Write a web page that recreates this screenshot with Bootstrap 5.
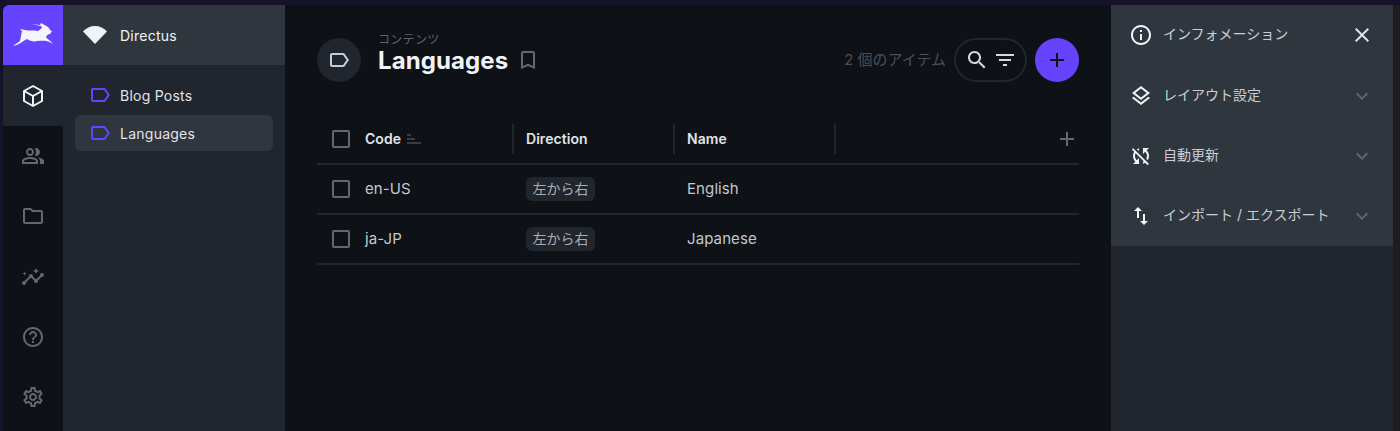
<!DOCTYPE html>
<html lang="ja"><head><meta charset="utf-8">
<link href="https://cdn.jsdelivr.net/npm/bootstrap@5.3.0/dist/css/bootstrap.min.css" rel="stylesheet">
<style>
html,body{height:431px;overflow:hidden;background:#15122a;font-family:Inter,"Noto Sans CJK JP",sans-serif;}
.shell{height:431px;padding:5px 0 0 3px;background:#15122a;}
.frame{height:100%;border-top-left-radius:6px;overflow:hidden;background:#0e1116;}
.mod{width:60px;background:#0e1116;}
.mod-item{height:60.3px;color:#63676f;}
.mod-logo{height:60px;background:#6644ff;}
.mod-on{height:61px;background:#21262e;color:#f0f4f9;}
.navside{width:222px;background:#21262e;color:#e0e4ea;font-size:14px;}
.projbar{height:60px;background:#30363e;padding-left:20px;gap:13px;color:#f0f4f9;letter-spacing:.25px;}
.navlist{padding:12px 12px 0;}
.navrow{height:36px;border-radius:6px;padding-left:13px;gap:8px;margin-bottom:2px;letter-spacing:.25px;}
.navrow.cur{background:#30363e;}
.mainarea{padding:0 32px;background:#0e1116;min-width:0;}
.headbar{height:60px;margin-top:25px;}
.hicon{width:44px;height:44px;border-radius:50%;background:#21262e;color:#c8ccd2;}
.htext{padding-bottom:11px;margin-left:17px;}
.crumb{font-size:12px;line-height:14px;color:#5f636b;margin-top:-2px;margin-bottom:-1px;letter-spacing:.3px;}
.ttl{font-size:24px;font-weight:700;color:#f0f4f9;line-height:29px;letter-spacing:.1px;}
.cnt{font-size:15px;color:#4b4f57;}
.searchpill{width:73px;height:44px;border:2px solid #21262e;border-radius:22px;color:#d3dae4;}
.addbtn{width:44px;height:44px;border-radius:50%;background:#6644ff;color:#0e1116;}
.tbl{margin-top:26px;font-size:15px;letter-spacing:.1px;}
.trow{display:grid;grid-template-columns:36px 161px 161px 161px 1fr;height:50px;border-bottom:2px solid #21262e;color:#c3c8cf;align-items:center;}
.thead{height:49px;padding-bottom:2px;color:#e0e4ea;font-weight:600;font-size:14px;letter-spacing:.05px;}
.cellc{padding-left:12px;}
.hcell{height:30px;display:flex;align-items:center;gap:6px;border-right:2px solid #21262e;}
.padl{padding-left:12px;}
.chk{width:18px;height:18px;border:2px solid #63676f;border-radius:2px;margin-left:15px;display:block;}
.dirbadge{display:inline-block;background:#21262e;border-radius:6px;font-size:14px;line-height:24px;padding:0 6.5px;color:#a9adb4;letter-spacing:0;}
.side{width:282px;background:#21262e;}
.sidetop{background:#30363e;height:241px;color:#c9ced5;font-size:14px;}
.siderow{height:60px;padding:0 19px 0 18px;}
.siderow.firstrow{margin-bottom:1px;}
.sidelabel{padding-bottom:3px;}
.sideic{width:24px;color:#f0f4f9;margin-right:10px;}
.rstrip{width:7px;background:#1d1d1f;}
.cheve{color:#5f656e;}
</style></head><body>
<div class="shell"><div class="frame d-flex">
<div class="mod d-flex flex-column flex-shrink-0">
 <div class="mod-logo d-flex align-items-center justify-content-center">
  <svg width="42" height="26" viewBox="0 0 42 26"><path fill="#f4f6ff" d="M1 24 L8 19 C9 16 9 12 10 9 L8 7 L13 8 C17 9 22 8 26 9 L30 6 L29 4 L19 2 L28 3 L29 1 L36 5 C38 7 38 9 40 9 L38 12 C36 12 35 13 34 15 C35 17 38 18 41 22 L39 21 C35 18 30 19 25 19 C22 20 18 19 15 17 C11 19 7 23 1 24 Z"/></svg>
 </div>
 <div class="mod-on d-flex align-items-center justify-content-center">
  <svg width="24" height="24" viewBox="0 0 24 24" fill="none" stroke="currentColor" stroke-width="2" stroke-linejoin="round"><path d="M12 2 21 7v10l-9 5-9-5V7z"/><path d="M3 7l9 5 9-5M12 12v10"/></svg>
 </div>
 <div class="mod-item d-flex align-items-center justify-content-center">
  <svg width="24" height="24" viewBox="0 0 24 24" fill="currentColor"><path d="M16.670 13.130C18.040 14.060 19 15.320 19 17v3h4v-3c0-2.180-3.570-3.470-6.330-3.870zM15 12c2.210 0 4-1.790 4-4s-1.790-4-4-4c-.47 0-.91.1-1.330.24C14.500 5.270 15 6.580 15 8s-.5 2.730-1.330 3.760c.42.14.86.24 1.330.24zM9 12c2.210 0 4-1.790 4-4s-1.790-4-4-4-4 1.790-4 4 1.790 4 4 4zm0-6c1.100 0 2 .9 2 2s-.9 2-2 2-2-.9-2-2 .9-2 2-2zM9 13c-2.670 0-8 1.340-8 4v3h16v-3c0-2.660-5.330-4-8-4zm6 5H3v-.99C3.200 16.290 6.300 15 9 15s5.800 1.290 6 2v1z"/></svg>
 </div>
 <div class="mod-item d-flex align-items-center justify-content-center">
  <svg width="24" height="24" viewBox="0 0 24 24" fill="currentColor"><path d="M9.170 6l2 2H20v10H4V6h5.170M10 4H4c-1.100 0-1.990.9-1.990 2L2 18c0 1.100.9 2 2 2h16c1.100 0 2-.9 2-2V8c0-1.100-.9-2-2-2h-8l-2-2z"/></svg>
 </div>
 <div class="mod-item d-flex align-items-center justify-content-center">
  <svg width="24" height="24" viewBox="0 0 24 24" fill="currentColor"><path d="M21 8c-1.450 0-2.260 1.440-1.930 2.510l-3.550 3.560c-.3-.09-.74-.09-1.040 0l-2.550-2.550C12.270 10.450 11.460 9 10 9c-1.450 0-2.270 1.440-1.930 2.520l-4.560 4.550C2.440 15.740 1 16.550 1 18c0 1.100.9 2 2 2 1.450 0 2.260-1.440 1.930-2.510l4.550-4.560c.3.09.74.09 1.040 0l2.550 2.550C12.730 16.550 13.540 18 15 18c1.450 0 2.270-1.440 1.930-2.520l3.560-3.550C21.560 12.260 23 11.450 23 10c0-1.100-.9-2-2-2z"/><path d="M15 9l.94-2.070L18 6l-2.060-.93L15 3l-.92 2.070L12 6l2.080.93zM3.500 11 4 9l2-.5L4 8l-.5-2L3 8l-2 .5L3 9z"/></svg>
 </div>
 <div class="mod-item d-flex align-items-center justify-content-center">
  <svg width="24" height="24" viewBox="0 0 24 24" fill="currentColor"><path d="M11 18h2v-2h-2v2zm1-16C6.480 2 2 6.480 2 12s4.480 10 10 10 10-4.480 10-10S17.520 2 12 2zm0 18c-4.410 0-8-3.590-8-8s3.590-8 8-8 8 3.590 8 8-3.590 8-8 8zm0-14c-2.210 0-4 1.790-4 4h2c0-1.100.9-2 2-2s2 .9 2 2c0 2-3 1.750-3 5h2c0-2.250 3-2.500 3-5 0-2.210-1.790-4-4-4z"/></svg>
 </div>
 <div class="mod-item d-flex align-items-center justify-content-center">
  <svg width="24" height="24" viewBox="0 0 24 24" fill="currentColor"><path d="M19.430 12.980c.04-.32.07-.64.07-.98 0-.34-.03-.66-.07-.98l2.110-1.650c.19-.15.24-.42.12-.64l-2-3.460c-.09-.16-.26-.25-.44-.25-.06 0-.12.01-.17.03l-2.490 1c-.52-.4-1.080-.73-1.690-.98l-.38-2.650C14.460 2.180 14.250 2 14 2h-4c-.25 0-.46.18-.49.42l-.38 2.650c-.61.25-1.170.59-1.690.98l-2.490-1c-.06-.02-.12-.03-.18-.03-.17 0-.34.09-.43.25l-2 3.460c-.13.22-.07.49.12.64l2.110 1.650c-.04.32-.07.65-.07.98 0 .33.03.66.07.98l-2.110 1.650c-.19.15-.24.42-.12.64l2 3.460c.09.16.26.25.44.25.06 0 .12-.01.17-.03l2.490-1c.52.4 1.080.73 1.690.98l.38 2.650c.03.24.24.42.49.42h4c.25 0 .46-.18.49-.42l.38-2.650c.61-.25 1.170-.59 1.690-.98l2.490 1c.06.02.12.03.18.03.17 0 .34-.09.43-.25l2-3.460c.12-.22.07-.49-.12-.64l-2.110-1.650zm-1.980-1.710c.04.31.05.52.05.73 0 .21-.02.43-.05.73l-.14 1.130.89.7 1.080.84-.7 1.210-1.270-.51-1.040-.42-.9.68c-.43.32-.84.56-1.250.73l-1.060.43-.16 1.130-.2 1.350h-1.400l-.19-1.350-.16-1.130-1.060-.43c-.43-.18-.83-.41-1.230-.71l-.91-.7-1.060.43-1.270.51-.7-1.210 1.080-.84.89-.7-.14-1.130c-.03-.31-.05-.54-.05-.74s.02-.43.05-.73l.14-1.130-.89-.7-1.080-.84.7-1.210 1.270.51 1.040.42.9-.68c.43-.32.84-.56 1.250-.73l1.060-.43.16-1.130.2-1.350h1.390l.19 1.350.16 1.130 1.060.43c.43.18.83.41 1.230.71l.91.7 1.060-.43 1.270-.51.7 1.210-1.070.85-.89.7.14 1.130zM12 8c-2.210 0-4 1.790-4 4s1.790 4 4 4 4-1.790 4-4-1.790-4-4-4zm0 6c-1.100 0-2-.9-2-2s.9-2 2-2 2 .9 2 2-.9 2-2 2z"/></svg>
 </div>
</div>
<div class="navside flex-shrink-0">
 <div class="projbar d-flex align-items-center">
  <svg width="24" height="18" viewBox="0 0 24 18"><path fill="#f0f4f9" d="M0 5.500C3 2 7.500 0 12 0s9 2 12 5.500L12 18z"/></svg>
  <span>Directus</span>
 </div>
 <div class="navlist">
  <div class="navrow d-flex align-items-center">
   <svg width="24" height="24" viewBox="0 0 24 24" fill="#6644ff"><path d="M17.630 5.840C17.270 5.330 16.670 5 16 5L5 5.010C3.900 5.010 3 5.900 3 7v10c0 1.100.9 1.990 2 1.990L16 19c.67 0 1.270-.33 1.630-.84L22 12l-4.370-6.160zM16 17H5V7h11l3.550 5L16 17z"/></svg><span>Blog Posts</span></div>
  <div class="navrow cur d-flex align-items-center">
   <svg width="24" height="24" viewBox="0 0 24 24" fill="#6644ff"><path d="M17.630 5.840C17.270 5.330 16.670 5 16 5L5 5.010C3.900 5.010 3 5.900 3 7v10c0 1.100.9 1.990 2 1.990L16 19c.67 0 1.270-.33 1.630-.84L22 12l-4.370-6.160zM16 17H5V7h11l3.550 5L16 17z"/></svg><span>Languages</span></div>
 </div>
</div>
<div class="mainarea flex-grow-1">
 <div class="headbar d-flex align-items-center">
  <div class="hicon d-flex align-items-center justify-content-center">
   <svg width="24" height="24" viewBox="0 0 24 24" fill="currentColor"><path d="M17.630 5.840C17.270 5.330 16.670 5 16 5L5 5.010C3.900 5.010 3 5.900 3 7v10c0 1.100.9 1.990 2 1.990L16 19c.67 0 1.270-.33 1.630-.84L22 12l-4.370-6.160zM16 17H5V7h11l3.550 5L16 17z"/></svg>
  </div>
  <div class="htext">
   <div class="crumb">コンテンツ</div>
   <div class="d-flex align-items-center"><div class="ttl">Languages</div>
    <svg class="ms-2" width="24" height="24" viewBox="0 0 24 24" fill="#63676f"><path d="M17 3H7c-1.100 0-1.990.9-1.990 2L5 21l7-3 7 3V5c0-1.100-.9-2-2-2zm0 15l-5-2.180L7 18V5h10v13z"/></svg></div>
  </div>
  <div class="ms-auto d-flex align-items-center">
   <span class="cnt me-2">2 個のアイテム</span>
   <div class="searchpill d-flex align-items-center justify-content-center gap-1">
    <svg width="24" height="24" viewBox="0 0 24 24" fill="currentColor"><path d="M15.500 14h-.79l-.28-.27C15.410 12.590 16 11.110 16 9.500 16 5.910 13.090 3 9.500 3S3 5.910 3 9.500 5.910 16 9.500 16c1.610 0 3.090-.59 4.230-1.570l.27.28v.79l5 4.990L20.490 19l-4.990-5zm-6 0C7.010 14 5 11.990 5 9.500S7.010 5 9.500 5 14 7.010 14 9.500 11.990 14 9.500 14z"/></svg>
    <svg width="24" height="24" viewBox="0 0 24 24" fill="currentColor"><path d="M10 18h4v-2h-4v2zM3 6v2h18V6H3zm3 7h12v-2H6v2z"/></svg>
   </div>
   <div class="addbtn ms-2 d-flex align-items-center justify-content-center">
    <svg width="24" height="24" viewBox="0 0 24 24" fill="currentColor"><path d="M19 13h-6v6h-2v-6H5v-2h6V5h2v6h6v2z"/></svg>
   </div>
  </div>
 </div>
 <div class="tbl">
  <div class="trow thead">
   <span class="chk"></span>
   <div class="hcell cellc">Code <svg width="14" height="10" viewBox="0 0 14 10" fill="none" stroke="#63676f" stroke-width="1.200"><path d="M0 1h4M0 5h8M0 9h14"/></svg></div>
   <div class="hcell padl">Direction</div>
   <div class="hcell padl">Name</div>
   <div class="d-flex justify-content-end"><svg width="24" height="24" viewBox="0 0 24 24" fill="#63676f"><path d="M19 13h-6v6h-2v-6H5v-2h6V5h2v6h6v2z"/></svg></div>
  </div>
  <div class="trow"><span class="chk"></span><div class="cellc">en-US</div><div class="padl"><span class="dirbadge">左から右</span></div><div class="padl">English</div><div></div></div>
  <div class="trow"><span class="chk"></span><div class="cellc">ja-JP</div><div class="padl"><span class="dirbadge">左から右</span></div><div class="padl">Japanese</div><div></div></div>
 </div>
</div>
<div class="side flex-shrink-0">
 <div class="sidetop">
  <div class="siderow firstrow d-flex align-items-center">
   <svg class="sideic" width="24" height="24" viewBox="0 0 24 24" fill="currentColor"><path d="M11 7h2v2h-2zm0 4h2v6h-2zm1-9C6.480 2 2 6.480 2 12s4.480 10 10 10 10-4.480 10-10S17.520 2 12 2zm0 18c-4.410 0-8-3.590-8-8s3.590-8 8-8 8 3.590 8 8-3.590 8-8 8z"/></svg>
   <span class="sidelabel flex-grow-1">インフォメーション</span>
   <svg width="24" height="24" viewBox="0 0 24 24" fill="#dfe3e8"><path d="M19 6.410 17.590 5 12 10.590 6.410 5 5 6.410 10.590 12 5 17.590 6.410 19 12 13.410 17.590 19 19 17.590 13.410 12z"/></svg>
  </div>
  <div class="siderow d-flex align-items-center">
   <svg class="sideic" width="24" height="24" viewBox="0 0 24 24" fill="currentColor"><path d="M11.990 18.540l-7.370-5.730L3 14.070l9 7 9-7-1.630-1.270zM12 16l7.360-5.730L21 9l-9-7-9 7 1.630 1.270L12 16zm0-11.470L17.740 9 12 13.470 6.260 9 12 4.530z"/></svg>
   <span class="sidelabel flex-grow-1">レイアウト設定</span>
   <svg class="cheve" width="24" height="24" viewBox="0 0 24 24" fill="currentColor"><path d="M16.590 8.590 12 13.170 7.410 8.590 6 10l6 6 6-6z"/></svg>
  </div>
  <div class="siderow d-flex align-items-center">
   <svg class="sideic" width="24" height="24" viewBox="0 0 24 24" fill="currentColor"><path d="M10 6.350V4.260c-.8.21-1.550.54-2.230.96l1.460 1.460c.25-.12.5-.24.77-.33zm-7.140-.94 2.360 2.360C4.450 8.990 4 10.440 4 12c0 2.210.91 4.200 2.360 5.640L4 20h6v-6l-2.240 2.240C6.680 15.150 6 13.660 6 12c0-1 .25-1.940.68-2.770l8.080 8.080c-.25.13-.5.25-.77.34v2.090c.8-.21 1.550-.54 2.230-.96l2.360 2.360 1.270-1.270L4.140 4.140 2.860 5.410zM20 4h-6v6l2.240-2.240C17.320 8.850 18 10.340 18 12c0 1-.25 1.940-.68 2.770l1.460 1.460C19.550 15.010 20 13.560 20 12c0-2.210-.91-4.200-2.360-5.640L20 4z"/></svg>
   <span class="sidelabel flex-grow-1">自動更新</span>
   <svg class="cheve" width="24" height="24" viewBox="0 0 24 24" fill="currentColor"><path d="M16.590 8.590 12 13.170 7.410 8.590 6 10l6 6 6-6z"/></svg>
  </div>
  <div class="siderow d-flex align-items-center">
   <svg class="sideic" width="24" height="24" viewBox="0 0 24 24" fill="currentColor"><path d="M16 17.010V10h-2v7.010h-3L15 21l4-3.990h-3zM9 3 5 6.990h3V14h2V6.990h3L9 3z"/></svg>
   <span class="sidelabel flex-grow-1">インポート / エクスポート</span>
   <svg class="cheve" width="24" height="24" viewBox="0 0 24 24" fill="currentColor"><path d="M16.590 8.590 12 13.170 7.410 8.590 6 10l6 6 6-6z"/></svg>
  </div>
 </div>
</div>
<div class="rstrip flex-shrink-0"></div>
</div></div>
<script src="https://cdn.jsdelivr.net/npm/bootstrap@5.3.0/dist/js/bootstrap.bundle.min.js"></script>
</body></html>
